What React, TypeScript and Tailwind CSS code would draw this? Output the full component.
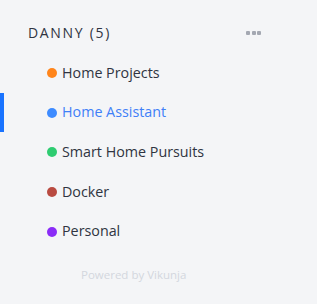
import React from "react";

const projects = [
  { name: "Home Projects", color: "#ff851b", active: false },
  { name: "Home Assistant", color: "#3d8bff", active: true },
  { name: "Smart Home Pursuits", color: "#2ecc71", active: false },
  { name: "Docker", color: "#b94b41", active: false },
  { name: "Personal", color: "#8a2cf7", active: false },
];

export default function App() {
  return (
    <div
      className="w-[317px] h-[304px] bg-[#f4f5f7] overflow-hidden"
      style={{ fontFamily: '"Open Sans", sans-serif' }}
    >
      <div className="pt-[20px] flex items-center h-[46px] pl-[28px] pr-[56px] justify-between">
        <span className="text-[14px] tracking-[0.12em] text-[#2f3441] leading-none">DANNY (5)</span>
        <span className="flex gap-[1.5px]">
          <span className="w-[4px] h-[4px] bg-[#a4a8b2] rounded-[1px]" />
          <span className="w-[4px] h-[4px] bg-[#a4a8b2] rounded-[1px]" />
          <span className="w-[4px] h-[4px] bg-[#a4a8b2] rounded-[1px]" />
        </span>
      </div>
      <ul className="mt-[7px]">
        {projects.map((p) => (
          <li
            key={p.name}
            className={`h-[39.7px] flex items-center pl-[43px] gap-[5px] border-l-[4px] ${
              p.active ? "border-[#1973ff] text-[#3f80f8]" : "border-transparent text-[#2f3441]"
            }`}
          >
            <span className="w-[10px] h-[10px] rounded-full shrink-0" style={{ backgroundColor: p.color }} />
            <span className="text-[14.3px] leading-none">{p.name}</span>
          </li>
        ))}
      </ul>
      <div className="mt-[16px] pl-[81px] text-[11.5px] text-[#d3d7de] leading-4">Powered by Vikunja</div>
    </div>
  );
}
